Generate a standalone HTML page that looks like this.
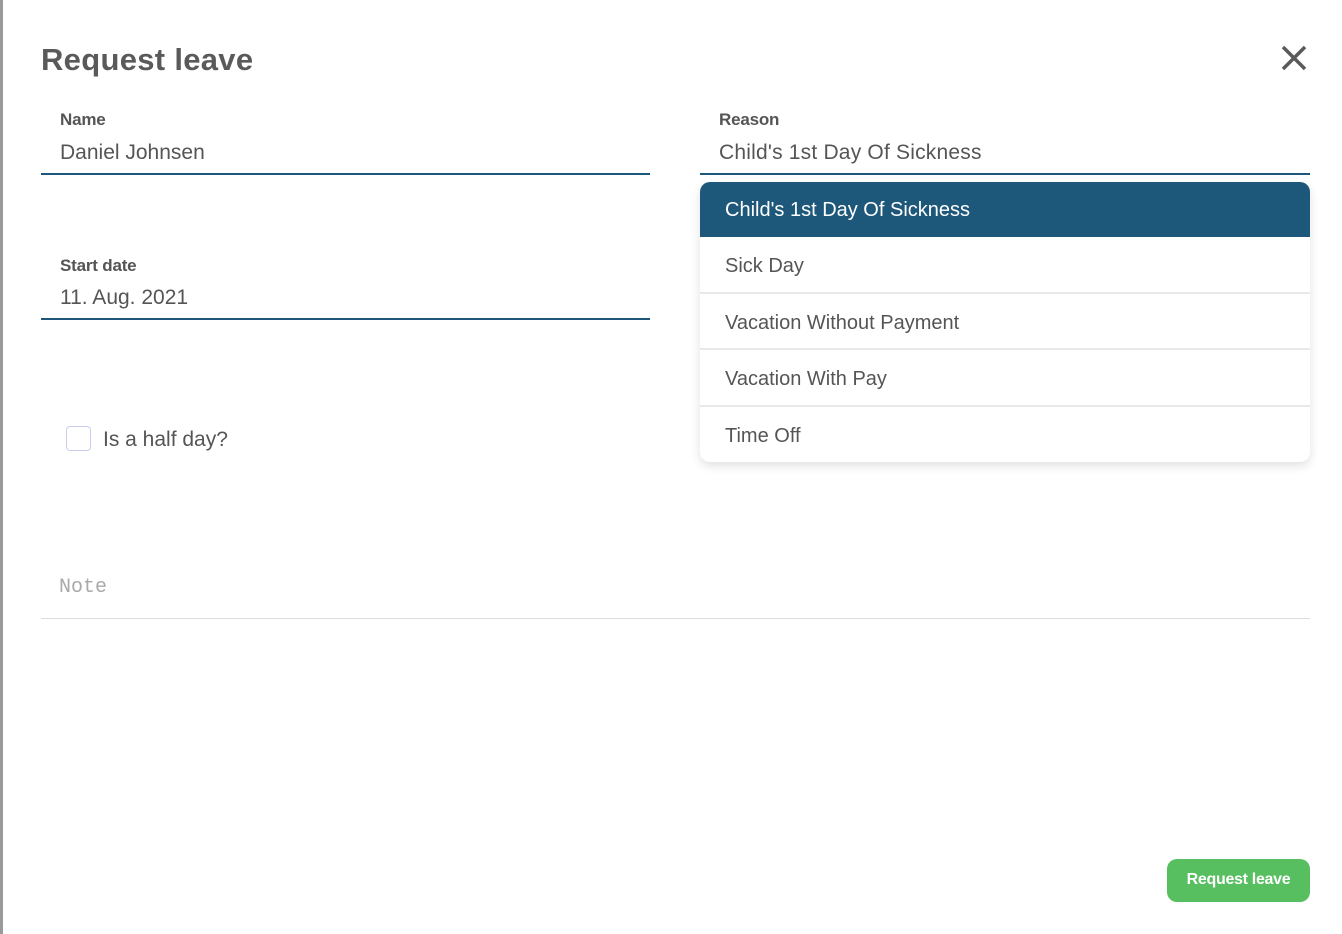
<!DOCTYPE html>
<html><head><style>
*{margin:0;padding:0;box-sizing:border-box}
body{width:1342px;height:934px;background:#fff;position:relative;overflow:hidden;font-family:"Liberation Sans",sans-serif;color:#555}
.lbar{position:absolute;left:0;top:0;width:3px;height:934px;background:#9a9a9a}
.t{position:absolute;white-space:nowrap}
.line{position:absolute;height:2px;background:#1d5779}
.dd{position:absolute;left:700px;top:182px;width:610px;height:280px;border-radius:10px;background:#fff;box-shadow:0 4px 10px rgba(0,0,0,.12);overflow:hidden}
.it{height:56.5px;border-bottom:2px solid #e8e8e8;font-size:20px;color:#555;padding:18px 0 0 25px}
.it.a{background:#1d5779;color:#fff;border-bottom:none;height:55px;padding-top:17px}
.btn{position:absolute;left:1167px;top:859px;width:143px;height:43px;background:#57bf5f;border-radius:10px;color:#fff;font-weight:bold;font-size:16px;text-align:center;line-height:42px;letter-spacing:-0.3px}
.lab{font-size:17px;color:#555;font-weight:bold;letter-spacing:-0.2px}
</style></head><body>
<div class="lbar"></div>
<div class="t" style="left:41px;top:42px;font-size:31px;color:#5a5a5a;font-weight:bold;letter-spacing:0.3px">Request leave</div>
<svg style="position:absolute;left:1281px;top:45px" width="26" height="26" viewBox="0 0 26 26"><path d="M2 2L24 24M24 2L2 24" stroke="#5a5a5a" stroke-width="3.5"/></svg>
<div class="t lab" style="left:60px;top:110px">Name</div>
<div class="t" style="left:60px;top:141px;font-size:21px;color:#555">Daniel Johnsen</div>
<div class="line" style="left:41px;top:173px;width:609px"></div>
<div class="t lab" style="left:719px;top:110px">Reason</div>
<div class="t" style="left:719px;top:141px;font-size:21px;color:#555;letter-spacing:0.2px">Child's 1st Day Of Sickness</div>
<div class="line" style="left:700px;top:173px;width:610px"></div>
<div class="t lab" style="left:60px;top:256px">Start date</div>
<div class="t" style="left:60px;top:286px;font-size:21px;color:#555">11. Aug. 2021</div>
<div class="line" style="left:41px;top:318px;width:609px"></div>
<div style="position:absolute;left:66px;top:426px;width:25px;height:25px;border:1px solid #c9cdf0;border-radius:4px"></div>
<div class="t" style="left:103px;top:428px;font-size:21px;color:#555">Is a half day?</div>
<div class="t" style="left:59px;top:576px;font-size:20px;color:#aaa;font-family:'Liberation Mono',monospace">Note</div>
<div style="position:absolute;left:41px;top:618px;width:1269px;height:1px;background:#ddd"></div>
<div class="dd">
<div class="it a">Child's 1st Day Of Sickness</div>
<div class="it">Sick Day</div>
<div class="it">Vacation Without Payment</div>
<div class="it">Vacation With Pay</div>
<div class="it" style="border:none">Time Off</div>
</div>
<div class="btn">Request leave</div>
</body></html>
